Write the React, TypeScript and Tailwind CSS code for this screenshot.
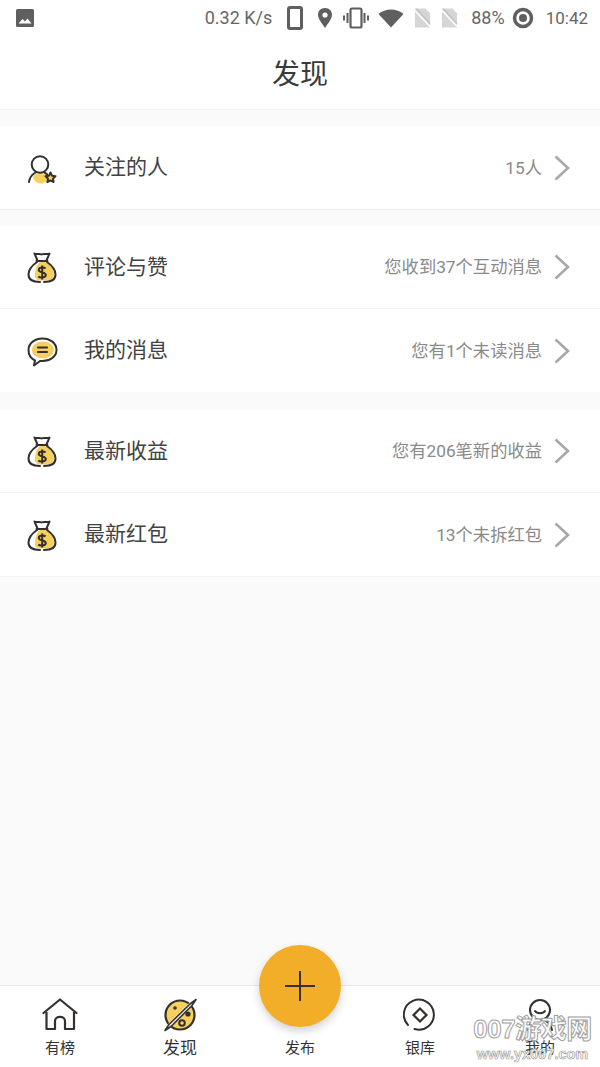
import type { ReactNode } from 'react';

const ink = '#33302e';
const gold = '#f7cf5d';

function Chevron() {
  return (
    <svg width="18" height="28" viewBox="0 0 18 28" fill="none" className="ml-[11px] mr-[29px] shrink-0">
      <path d="M2.5 2.5 L15 14 L2.5 25.5" stroke="#a8a8a8" strokeWidth="2.6" />
    </svg>
  );
}

function FollowIcon() {
  return (
    <svg width="32" height="32" viewBox="0 0 32 32" fill="none">
      <path d="M7 25 C9 21.500 13 20.500 16 20.500 C19 20.500 21 22 22 25 C21 30 18 31.500 14.500 31.500 C11 31.500 8 29 7 25Z" fill={gold} />
      <circle cx="14" cy="12.500" r="8.300" stroke={ink} strokeWidth="2" />
      <path d="M3 30 C3.500 25.500 6 22.500 9.500 20.500" stroke={ink} strokeWidth="2" strokeLinecap="round" />
      <path d="M19 20.800 C20 21.300 20.700 21.800 21.300 22.400" stroke={ink} strokeWidth="2" strokeLinecap="round" />
      <path d="M24.500 20.500 L26 23.700 L29.500 24.200 L27 26.600 L27.600 30 L24.500 28.400 L21.400 30 L22 26.600 L19.500 24.200 L23 23.700Z" fill={gold} stroke={ink} strokeWidth="2" strokeLinejoin="round" />
    </svg>
  );
}

function MoneyIcon() {
  return (
    <svg width="32" height="34" viewBox="0 0 32 34" fill="none">
      <path d="M16 11.500 C22 11.500 28 18 28 24 C28 29.500 23 30.500 16 30.500 C11 30.500 8.500 29 9 24 C9.500 18 12 11.500 16 11.500Z" fill={gold} />
      <path d="M11.500 10.500 L8.500 3.500 C11 5 13 3 15.500 4.500 C18 3 21 5 23.500 3.500 L20.500 10.500" stroke={ink} strokeWidth="2" strokeLinejoin="round" />
      <path d="M10.500 11 L21.500 11" stroke={ink} strokeWidth="2" strokeLinecap="round" />
      <path d="M11 12 C6 15.500 2.500 20 2.500 24.500 C2.500 29.500 6.500 32 14 32 M18 32 C25.500 32 29.500 29.500 29.500 24.500 C29.500 20 26 15.500 21 12" stroke={ink} strokeWidth="2" strokeLinecap="round" />
      <path d="M19.500 18.500 C18 17 12.800 17 12.800 20 C12.800 23.300 19.800 21.700 19.800 25 C19.800 28 14 28 12.300 26.500 M16.200 15.500 L16.200 29.500" stroke={ink} strokeWidth="2" />
    </svg>
  );
}

function MessageIcon() {
  return (
    <svg width="32" height="32" viewBox="0 0 32 32" fill="none">
      <ellipse cx="17" cy="15" rx="11" ry="8.500" fill={gold} />
      <path d="M8 30.500 L9 25.500 C5 23.500 2.500 19.500 2.500 15 C2.500 8 9 3.500 16.500 3.500 C24 3.500 30.500 8 30.500 15 C30.500 21.500 24 26 16.500 26 C15.500 26 14.500 26 14 26 Z" stroke={ink} strokeWidth="2" strokeLinejoin="round" />
      <path d="M12 12.500 H21 M12 17 H21" stroke={ink} strokeWidth="2.200" strokeLinecap="round" />
    </svg>
  );
}

function Row({ icon, title, note, line }: { icon: ReactNode; title: string; note: string; line?: boolean }) {
  return (
    <div className={`flex h-[83px] items-center bg-white ${line ? 'border-b border-[#f3f3f3]' : ''}`}>
      <div className="flex w-[84px] shrink-0 justify-center pr-[1px]">
        <div className="flex h-[34px] w-[32px] items-center justify-center">{icon}</div>
      </div>
      <span className="text-[21px] leading-none text-[#424242]">{title}</span>
      <span className="ml-auto pt-[2px] text-[17.300px] leading-none text-[#8a8a8a]">{note}</span>
      <Chevron />
    </div>
  );
}

function Tab({ icon, label, size = 'text-[15px]' }: { icon: ReactNode; label: string; size?: string }) {
  return (
    <div className="flex w-[120px] flex-col items-center pt-[12px]">
      <div className="flex h-[34px] items-center justify-center">{icon}</div>
      <span className={`mt-[7px] leading-[18px] text-[#333] ${size}`}>{label}</span>
    </div>
  );
}

function StatusBar() {
  return (
    <div className="flex h-[36px] items-center bg-white pl-[15px] pr-[12px] text-[#666]">
      <svg width="20" height="20" viewBox="0 0 20 20">
        <rect x="1" y="1" width="18" height="18" rx="1.500" fill="#5f5f5f" />
        <path d="M3.500 15.500 L7.500 11 L10 13.500 L12.500 10.500 L16.500 15.500Z" fill="#fff" />
      </svg>
      <span className="ml-auto text-[18px] leading-none">0.32 K/s</span>
      <svg width="16" height="24" viewBox="0 0 16 24" className="ml-[15px]">
        <rect x="1.500" y="1.500" width="13" height="21" rx="1.500" fill="none" stroke="#5f5f5f" strokeWidth="3" />
      </svg>
      <svg width="16" height="22" viewBox="0 0 16 22" className="ml-[14px]">
        <path d="M8 1 C3.500 1 1 4.200 1 7.800 C1 12 5.500 17 8 21 C10.500 17 15 12 15 7.800 C15 4.200 12.500 1 8 1Z" fill="#5f5f5f" />
        <circle cx="8" cy="8" r="2.600" fill="#fff" />
      </svg>
      <svg width="26" height="22" viewBox="0 0 26 22" className="ml-[10px]">
        <rect x="7.500" y="1.500" width="11" height="19" rx="1.500" fill="none" stroke="#5f5f5f" strokeWidth="2.200" />
        <path d="M4.500 6 V16 M21.500 6 V16 M1 8.500 V13.500 M25 8.500 V13.500" stroke="#5f5f5f" strokeWidth="2" />
      </svg>
      <svg width="26" height="20" viewBox="0 0 26 20" className="ml-[9px]">
        <path d="M0.500 6 C7 0 19 0 25.500 6 L13 19.500Z" fill="#5f5f5f" />
      </svg>
      <svg width="17" height="22" viewBox="0 0 18 22" className="ml-[10px]">
        <path d="M1 1 H12 L17 6 V21 H1Z" fill="#d6d6d6" />
        <path d="M1 3 L17 20" stroke="#fff" strokeWidth="1.500" />
        <path d="M2.500 1 L17 17" stroke="#bdbdbd" strokeWidth="1.200" />
      </svg>
      <svg width="17" height="22" viewBox="0 0 18 22" className="ml-[10px]">
        <path d="M1 1 H12 L17 6 V21 H1Z" fill="#d6d6d6" />
        <path d="M1 3 L17 20" stroke="#fff" strokeWidth="1.500" />
        <path d="M2.500 1 L17 17" stroke="#bdbdbd" strokeWidth="1.200" />
      </svg>
      <span className="ml-[13px] text-[18px] leading-none">88%</span>
      <svg width="22" height="22" viewBox="0 0 22 22" className="ml-[7px]">
        <circle cx="11" cy="11" r="8.500" fill="none" stroke="#5f5f5f" strokeWidth="3.500" />
        <circle cx="11" cy="11" r="4" fill="#5f5f5f" />
      </svg>
      <span className="ml-[12px] text-[17px] leading-none">10:42</span>
    </div>
  );
}

export default function App() {
  return (
    <div className="relative flex h-[1067px] w-[600px] flex-col overflow-hidden bg-[#fafafa] font-['Roboto','Noto_Sans_CJK_SC',sans-serif]">
      <StatusBar />
      <div className="flex h-[74px] items-center justify-center border-b border-[#f2f2f2] bg-white pt-[5px]">
        <h1 className="text-[28px] font-normal leading-none text-[#3a3a3a]">发现</h1>
      </div>

      <div className="mt-[16px] border-b border-[#f1f1f1]">
        <Row icon={<FollowIcon />} title="关注的人" note="15人" />
      </div>
      <div className="mt-[16px]">
        <Row icon={<MoneyIcon />} title="评论与赞" note="您收到37个互动消息" line />
        <Row icon={<MessageIcon />} title="我的消息" note="您有1个未读消息" />
      </div>
      <div className="mt-[18px] border-b border-[#f3f3f3]">
        <Row icon={<MoneyIcon />} title="最新收益" note="您有206笔新的收益" line />
        <Row icon={<MoneyIcon />} title="最新红包" note="13个未拆红包" />
      </div>

      <div className="mt-auto flex h-[82px] border-t border-[#e9e9e9] bg-white">
        <Tab
          label="有榜"
          icon={
            <svg width="36" height="34" viewBox="0 0 36 34" fill="none">
              <path d="M1.500 15 L18 1.500 L34.500 15" stroke={ink} strokeWidth="2.200" strokeLinecap="round" strokeLinejoin="round" />
              <path d="M4.500 14 V31 H13 V23 C13 17.500 23 17.500 23 23 V31 H32 V14" stroke={ink} strokeWidth="2.200" strokeLinejoin="round" />
            </svg>
          }
        />
        <Tab
          size="text-[17px]"
          label="发现"
          icon={
            <svg width="34" height="34" viewBox="0 0 34 34" fill="none">
              <circle cx="17" cy="17" r="14.500" fill={gold} stroke={ink} strokeWidth="2.200" />
              <path d="M2 32 L32 2" stroke="#fff" strokeWidth="4" />
              <path d="M2 32.500 L6 26.500 L27 6 L33 1.500 L29 7.500 L8 28.500Z" fill="#fff" stroke={ink} strokeWidth="1.600" strokeLinejoin="round" />
              <circle cx="12" cy="10" r="1.800" fill={ink} />
              <circle cx="25" cy="16" r="2.600" fill={ink} />
              <circle cx="19" cy="25" r="2.800" fill={gold} stroke={ink} strokeWidth="2" />
            </svg>
          }
        />
        <div className="flex w-[120px] flex-col items-center justify-end pb-[10px]">
          <span className="text-[15px] leading-[18px] text-[#333]">发布</span>
        </div>
        <Tab
          label="银库"
          icon={
            <svg width="34" height="34" viewBox="0 0 34 34" fill="none">
              <path d="M5 27 A15 15 0 1 1 11.500 31" stroke={ink} strokeWidth="2" strokeLinecap="round" />
              <path d="M17 10.500 L23.500 17 L17 23.500 L10.500 17Z" stroke={ink} strokeWidth="2.200" />
            </svg>
          }
        />
        <Tab
          label="我的"
          icon={
            <svg width="34" height="34" viewBox="0 0 34 34" fill="none">
              <circle cx="17" cy="12" r="10" stroke={ink} strokeWidth="2" />
              <path d="M12 13 C14 16 20 16 22 13" stroke={ink} strokeWidth="2" strokeLinecap="round" />
              <path d="M5 32 C6 27 9 24 11 23 M29 32 C28 27 25 24 23 23" stroke={ink} strokeWidth="2" strokeLinecap="round" />
            </svg>
          }
        />
      </div>

      <button className="absolute left-[259px] top-[945px] flex h-[82px] w-[82px] items-center justify-center rounded-full bg-[#f2ae28] shadow-[0_4px_10px_rgba(0,0,0,0.18)]">
        <svg width="32" height="32" viewBox="0 0 32 32">
          <path d="M16 1 V31 M1 16 H31" stroke={ink} strokeWidth="2" />
        </svg>
      </button>

      <div className="absolute left-[470px] top-[1014px] flex w-[125px] flex-col items-center text-white">
        <span className="font-['Liberation_Sans','Noto_Sans_CJK_SC',sans-serif] text-[26px] font-bold leading-[30px] tracking-[-0.500px] [-webkit-text-stroke:1px_#a0a0a0]">
          007游戏网
        </span>
        <span className="mt-[2px] font-['Liberation_Sans',sans-serif] text-[14.500px] font-bold leading-[16px] [-webkit-text-stroke:0.700px_#a0a0a0]">
          www.yx007.com
        </span>
      </div>
    </div>
  );
}
